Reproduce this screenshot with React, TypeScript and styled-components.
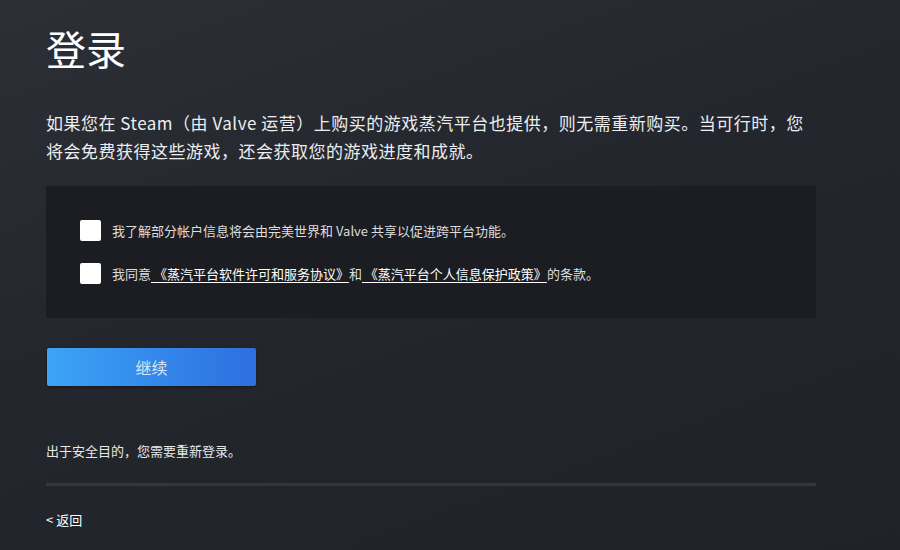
import React from "react";
import styled, { createGlobalStyle } from "styled-components";

const Global = createGlobalStyle`
  html, body { margin: 0; padding: 0; }
  body {
    width: 900px;
    height: 550px;
    overflow: hidden;
    background: #212429;
    font-family: "Noto Sans CJK SC", "Noto Sans", sans-serif;
    color: #ffffff;
  }
`;

const Page = styled.div`
  width: 900px;
  height: 550px;
  box-sizing: border-box;
  padding: 20px 84px 0 46px;
  background: linear-gradient(160deg, #2c2f36 0%, #23262c 45%, #1f2227 100%);
  display: flex;
  flex-direction: column;
`;

const Title = styled.h1`
  margin: 0;
  font-size: 40px;
  font-weight: 400;
  line-height: 56px;
  color: #ffffff;
`;

const Intro = styled.p`
  margin: 33px 0 0;
  font-size: 17px;
  line-height: 28px;
  letter-spacing: 0.5px;
  color: #eceef0;
  width: 766px;
`;

const Panel = styled.div`
  margin-top: 21px;
  background: #1b1d22;
  padding: 34px 34px 34px;
  display: flex;
  flex-direction: column;
  gap: 22px;
`;

const Row = styled.label`
  display: flex;
  align-items: center;
  gap: 11px;
  font-size: 13px;
  line-height: 21px;
  color: #dcdedf;
`;

const Box = styled.span`
  width: 21px;
  height: 21px;
  border-radius: 2px;
  background: #ffffff;
  flex: none;
`;

const Link = styled.a`
  color: #ffffff;
  text-decoration: underline;
  text-underline-offset: 3px;
`;

const Button = styled.button`
  margin-top: 30px;
  margin-left: 1px;
  width: 209px;
  height: 38px;
  border: none;
  border-radius: 2px;
  background: linear-gradient(90deg, #3ca4f6 0%, #2d6fe0 100%);
  color: #d6e6f8;
  font-family: inherit;
  font-size: 16px;
  box-shadow: 0 1px 3px rgba(0, 0, 0, 0.4);
  padding: 0;
`;

const Notice = styled.div`
  margin-top: 55px;
  font-size: 13px;
  line-height: 20px;
  color: #e8e9ea;
`;

const Divider = styled.div`
  margin-top: 22px;
  height: 3px;
  background: #33363d;
`;

const Back = styled.div`
  margin-top: 24px;
  font-size: 13px;
  line-height: 20px;
  color: #ffffff;
  display: flex;
  align-items: center;
  gap: 3px;
`;

export default function App() {
  return (
    <>
      <Global />
      <Page>
        <Title>登录</Title>
        <Intro>
          如果您在 Steam（由 Valve 运营）上购买的游戏蒸汽平台也提供，则无需重新购买。当可行时，您将会免费获得这些游戏，还会获取您的游戏进度和成就。
        </Intro>
        <Panel>
          <Row>
            <Box />
            <span>我了解部分帐户信息将会由完美世界和 Valve 共享以促进跨平台功能。</span>
          </Row>
          <Row>
            <Box />
            <span>
              我同意<Link> 《蒸汽平台软件许可和服务协议》</Link>和<Link> 《蒸汽平台个人信息保护政策》</Link>的条款。
            </span>
          </Row>
        </Panel>
        <Button>继续</Button>
        <Notice>出于安全目的，您需要重新登录。</Notice>
        <Divider />
        <Back>&lt; 返回</Back>
      </Page>
    </>
  );
}
